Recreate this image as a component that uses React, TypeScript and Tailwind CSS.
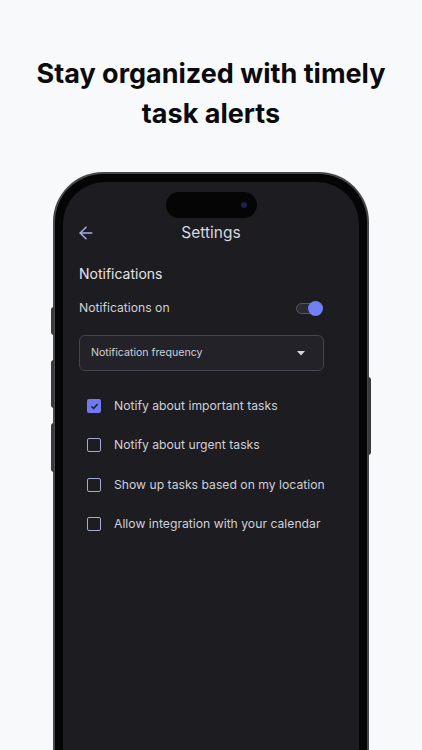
import { ArrowLeft } from 'lucide-react';

const options = [
  { label: 'Notify about important tasks', checked: true },
  { label: 'Notify about urgent tasks', checked: false },
  { label: 'Show up tasks based on my location', checked: false },
  { label: 'Allow integration with your calendar', checked: false },
];

const Checkbox = ({ checked }: { checked: boolean }) =>
  checked ? (
    <span className="flex h-[14px] w-[14px] shrink-0 items-center justify-center rounded-[2px] bg-[#7078f2]">
      <svg width="9" height="9" viewBox="0 0 10 10" fill="none">
        <path d="M2 5.2l2 2 4-4.4" stroke="#1c1c22" strokeWidth="1.6" strokeLinecap="round" strokeLinejoin="round" />
      </svg>
    </span>
  ) : (
    <span className="h-[14px] w-[14px] shrink-0 rounded-[2px] border-[1.5px] border-[#a3abd4]" />
  );

export default function App() {
  return (
    <main
      className="h-[750px] w-full overflow-hidden bg-[#f8f9fb]"
      style={{ fontFamily: 'Inter, "Noto Sans", sans-serif' }}
    >
      <h1 className="pt-[54px] text-center text-[27px] font-bold leading-[40px] text-[#0b0b0d]">
        Stay organized with timely
        <br />
        task alerts
      </h1>

      <div className="relative mx-auto mt-[38px] w-[316px]">
        {/* side buttons */}
        <span className="absolute left-[-2px] top-[135px] h-[28px] w-[3px] rounded-l-sm bg-[#3a3a3d]" />
        <span className="absolute left-[-2px] top-[188px] h-[48px] w-[3px] rounded-l-sm bg-[#3a3a3d]" />
        <span className="absolute left-[-2px] top-[251px] h-[49px] w-[3px] rounded-l-sm bg-[#3a3a3d]" />
        <span className="absolute right-[-2px] top-[205px] h-[78px] w-[3px] rounded-r-sm bg-[#3a3a3d]" />

        <div className="h-[620px] rounded-t-[50px] border-[2px] border-b-0 border-[#48484c] bg-[#050506] px-[8px] pt-[8px]">
          <div className="h-full rounded-t-[42px] bg-[#1c1c21] pt-[10px]">
            <div className="mx-auto flex h-[26px] w-[91px] items-center justify-end rounded-full bg-[#050506] pr-[10px]">
              <span className="h-[6px] w-[6px] rounded-full bg-[#1d1f4a]" />
            </div>

            <div className="relative mt-0 flex h-[30px] items-center px-[13px]">
              <ArrowLeft className="h-[20px] w-[20px] text-[#a5b0e8]" strokeWidth={1.8} />
              <span className="absolute inset-x-0 text-center text-[15.5px] text-[#d8d8de]">Settings</span>
            </div>

            <div className="pl-[16px] pr-[35px] pt-[16px]">
              <p className="text-[14px] leading-[20px] text-[#e4e4ea]">Notifications</p>

              <div className="mt-[14px] flex items-center justify-between pr-[3px]">
                <span className="text-[12.2px] leading-[20px] text-[#cfd0d8]">Notifications on</span>
                <span className="relative flex h-[11px] w-[25px] items-center rounded-full border border-[#55565f] bg-[#2b2c33]">
                  <span className="absolute right-[-3px] h-[15px] w-[15px] rounded-full bg-[#7180f5]" />
                </span>
              </div>

              <div className="mt-[17px] flex h-[36px] items-center justify-between rounded-[6px] border border-[#44454d] bg-[#222228] pl-[11px] pr-[18px]">
                <span className="text-[10.6px] text-[#cfd0d8]">Notification frequency</span>
                <svg width="8" height="5" viewBox="0 0 8 5">
                  <path d="M0 0h8L4 4.5z" fill="#d6d7de" />
                </svg>
              </div>

              <ul className="mt-[25px] flex flex-col gap-[19.4px] pl-[8px]">
                {options.map((o) => (
                  <li key={o.label} className="flex h-[20px] items-center gap-[13px]">
                    <Checkbox checked={o.checked} />
                    <span className="whitespace-nowrap text-[12.2px] text-[#cfd0d8]">{o.label}</span>
                  </li>
                ))}
              </ul>
            </div>
          </div>
        </div>
      </div>
    </main>
  );
}
